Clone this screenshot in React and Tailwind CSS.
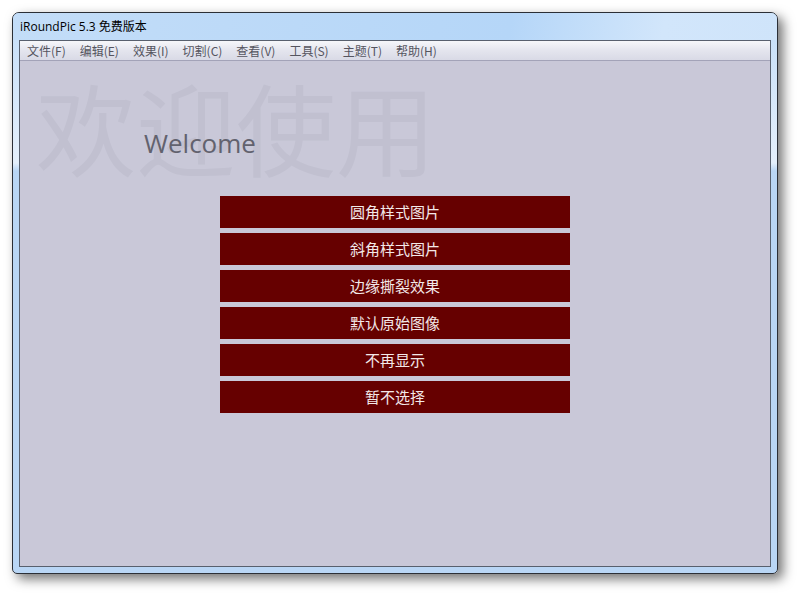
import React from "react";

const menus = ["文件(F)", "编辑(E)", "效果(I)", "切割(C)", "查看(V)", "工具(S)", "主题(T)", "帮助(H)"];
const actions = ["圆角样式图片", "斜角样式图片", "边缘撕裂效果", "默认原始图像", "不再显示", "暂不选择"];

export default function App() {
  return (
    <div className="w-[798px] h-[593px] bg-white pt-[12px] pl-[12px] overflow-hidden font-['Noto_Sans_CJK_SC',sans-serif]">
      <div className="w-[766px] h-[562px] flex flex-col rounded-t-[7px] rounded-b-[5px] border border-[#2b2f36] shadow-[5px_5px_12px_rgba(0,0,0,0.55)] bg-[linear-gradient(to_bottom,#c4def9_0px,#e4effb_150px,#b9d6f5_158px,#b9d6f5_100%)] overflow-hidden">
        {/* title bar */}
        <div className="h-[27px] flex items-center px-[7px] bg-[linear-gradient(100deg,#c3ddf8_0%,#b5d6f8_65%,#d2e6fb_85%,#cfe4fa_100%)] text-[12px] text-black font-['Open_Sans','Noto_Sans_CJK_SC',sans-serif]">
          iRoundPic 5.3 免费版本
        </div>
        {/* client area */}
        <div className="flex-1 flex flex-col mx-[6px] mb-[6px] border border-[#58606e] bg-[#c9c8d8]">
          <div className="h-[20px] flex items-center gap-[14px] px-[7px] text-[12px] leading-[16px] text-[#55555f] bg-[linear-gradient(to_bottom,#f6f7fa,#e4e5ee_50%,#d9dae6)] border-b border-[#a3a3b8]">
            {menus.map((m) => (
              <span key={m}>{m}</span>
            ))}
          </div>
          <div className="relative flex-1 flex flex-col">
            <div className="ml-[16px] mt-[15px] text-[100px] leading-none text-[#c1c0d0] select-none">
              欢迎使用
            </div>
            <div className="absolute left-[124px] top-[69px] text-[26px] leading-none text-[#62626e] font-['Open_Sans',sans-serif]">
              Welcome
            </div>
            <div className="ml-[200px] mt-[20px] w-[350px] flex flex-col gap-[5px]">
              {actions.map((a) => (
                <div key={a} className="h-[32px] flex items-center justify-center bg-[#660000] text-[15px] text-[#f3e8e8]">
                  {a}
                </div>
              ))}
            </div>
          </div>
        </div>
      </div>
    </div>
  );
}
